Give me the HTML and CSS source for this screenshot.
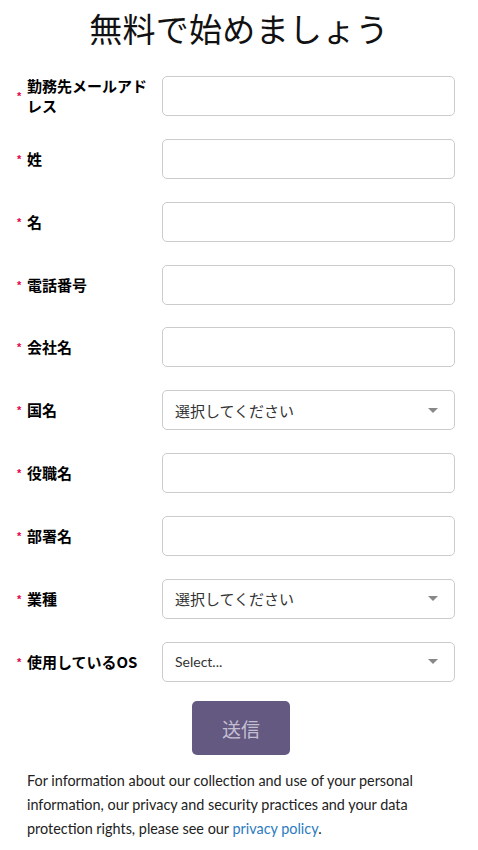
FILE: index.html
```html
<!DOCTYPE html>
<html lang="ja">
<head>
<meta charset="utf-8">
<title>無料で始めましょう</title>
<link rel="stylesheet" href="styles.css">
</head>
<body>
<h1 class="title">無料で始めましょう</h1>
<form class="form">
  <div class="row"><label class="label"><span class="req">*</span><span class="text">勤務先メールアドレス</span></label><input class="field" type="email"></div>
  <div class="row"><label class="label"><span class="req">*</span><span class="text">姓</span></label><input class="field" type="text"></div>
  <div class="row"><label class="label"><span class="req">*</span><span class="text">名</span></label><input class="field" type="text"></div>
  <div class="row"><label class="label"><span class="req">*</span><span class="text">電話番号</span></label><input class="field" type="tel"></div>
  <div class="row"><label class="label"><span class="req">*</span><span class="text">会社名</span></label><input class="field" type="text"></div>
  <div class="row"><label class="label"><span class="req">*</span><span class="text">国名</span></label><div class="field select"><span class="ph">選択してください</span><span class="caret"></span></div></div>
  <div class="row"><label class="label"><span class="req">*</span><span class="text">役職名</span></label><input class="field" type="text"></div>
  <div class="row"><label class="label"><span class="req">*</span><span class="text">部署名</span></label><input class="field" type="text"></div>
  <div class="row"><label class="label"><span class="req">*</span><span class="text">業種</span></label><div class="field select"><span class="ph">選択してください</span><span class="caret"></span></div></div>
  <div class="row"><label class="label"><span class="req">*</span><span class="text">使用しているOS</span></label><div class="field select"><span class="ph latin">Select...</span><span class="caret"></span></div></div>
  <div class="actions"><button class="submit" type="button">送信</button></div>
</form>
<p class="privacy">For information about our collection and use of your personal information, our privacy and security practices and your data protection rights, please see our <a class="link" href="#">privacy policy</a>.</p>
</body>
</html>
```

FILE: styles.css
```css
html, body {
  margin: 0;
  padding: 0;
  background: #ffffff;
}
body {
  width: 478px;
  font-family: "Noto Sans CJK JP", "Noto Sans", sans-serif;
  color: #000;
}
.title {
  margin: 0;
  padding-top: 6px;
  height: 76px;
  box-sizing: border-box;
  text-align: center;
  font-size: 33px;
  font-weight: 400;
  line-height: 44px;
  letter-spacing: 0.3px;
  color: #111;
}
.form {
  display: flex;
  flex-direction: column;
  gap: 22.85px;
  padding: 0 23px 0 17px;
}
.row {
  display: grid;
  grid-template-columns: 145px 293px;
  align-items: center;
}
.label {
  display: flex;
  align-items: center;
  font-size: 15px;
  font-weight: 700;
  line-height: 20px;
}
.req {
  color: #e4004b;
  font-family: "Liberation Sans", sans-serif;
  font-size: 11px;
  width: 10px;
  flex: none;
  align-self: center;
}
.text {
  width: 124px;
}
.field {
  box-sizing: border-box;
  width: 293px;
  height: 40px;
  border: 1px solid #cccccc;
  border-radius: 5px;
  background: #fff;
  margin: 0;
  padding: 0 12px;
  font-size: 15px;
}
.select {
  display: flex;
  align-items: center;
  justify-content: space-between;
}
.ph {
  color: #333;
  font-size: 15px;
}
.ph.latin {
  font-family: "Lato", "Noto Sans", sans-serif;
  font-size: 14px;
}
.caret {
  width: 0;
  height: 0;
  border-left: 5px solid transparent;
  border-right: 5px solid transparent;
  border-top: 5px solid #888;
  margin-right: 4px;
}
.actions {
  display: flex;
  justify-content: center;
  padding-left: 10px;
  margin-top: -3px;
}
.submit {
  width: 98px;
  height: 54px;
  border: none;
  border-radius: 5px;
  background: #635981;
  color: #c3bfd2;
  font-family: "Noto Sans CJK JP", sans-serif;
  font-size: 19px;
}
.privacy {
  margin: 14px 23px 0 27px;
  font-family: "Lato", "Noto Sans", sans-serif;
  font-size: 14.4px;
  line-height: 24px;
  color: #222;
}
.link {
  color: #2b7bc0;
  text-decoration: none;
}
```
